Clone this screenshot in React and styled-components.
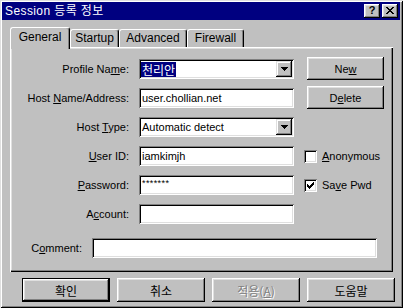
import React from 'react';
import styled, { createGlobalStyle } from 'styled-components';

const FONT = `"Liberation Sans", Arial, "Noto Sans CJK KR", sans-serif`;
const KFONT = `"Noto Sans CJK KR", "Liberation Sans", sans-serif`;

const Global = createGlobalStyle`
  html, body { margin: 0; padding: 0; background: #c0c0c0; }
  body { font-family: ${FONT}; }
  * { box-sizing: border-box; }
`;

const Window = styled.div`
  width: 403px;
  height: 308px;
  background: #c0c0c0;
  padding: 2px 3px 3px 2px;
  box-shadow: inset 1px 1px #dfdfdf, inset -1px -1px #000, inset 2px 2px #fff, inset -2px -2px #808080;
  display: flex;
  flex-direction: column;
  font-family: ${FONT};
  font-size: 11px;
  color: #000;
`;

const TitleBar = styled.div`
  height: 18px;
  background: #000080;
  display: flex;
  align-items: center;
  padding: 0 2px 0 3px;
`;

const TitleText = styled.div`
  color: #fff;
  font-family: ${FONT};
  font-size: 12px;
  letter-spacing: 0.4px;
  line-height: 18px;
`;

const TitleButtons = styled.div`
  margin-left: auto;
  display: flex;
  gap: 2px;
`;

const TitleButton = styled.div`
  width: 16px;
  height: 14px;
  background: #c0c0c0;
  box-shadow: inset -1px -1px #000, inset 1px 1px #fff, inset -2px -2px #808080, inset 2px 2px #dfdfdf;
  display: flex;
  align-items: center;
  justify-content: center;
  font-weight: bold;
  font-size: 11px;
  line-height: 1;
  color: #000;
  padding-bottom: 1px;
`;

const TabStrip = styled.div`
  margin: 7px 0 0 8px;
  height: 20px;
  display: flex;
  align-items: flex-end;
  position: relative;
  z-index: 2;
`;

const Tab = styled.div`
  width: ${p => p.$w}px;
  height: ${p => (p.$active ? 22 : 18)}px;
  margin-bottom: ${p => (p.$active ? -2 : 0)}px;
  background: #c0c0c0;
  border-top: 1px solid #fff;
  border-left: 1px solid #fff;
  border-right: 1px solid #000;
  border-radius: 3px 3px 0 0;
  box-shadow: inset -1px 0 #808080;
  display: flex;
  justify-content: center;
  padding-top: ${p => (p.$active ? 2 : 1)}px;
  font-size: 12px;
  line-height: 14px;
`;

const Panel = styled.div`
  margin-left: 8px;
  width: 383px;
  height: 225px;
  background: #c0c0c0;
  box-shadow: inset 1px 1px #fff, inset -1px -1px #000, inset -2px -2px #808080, inset 2px 2px #dfdfdf;
  padding: 12px 2px 0 2px;
  position: relative;
  z-index: 1;
`;

const FormGrid = styled.div`
  display: grid;
  grid-template-columns: 117px 155px auto;
  grid-template-rows: repeat(6, 20px);
  column-gap: 10px;
  row-gap: 9px;
  align-items: center;
`;

const Label = styled.div`
  text-align: right;
  white-space: nowrap;
  font-size: 11px;
`;

const Field = styled.div`
  height: 20px;
  width: ${p => p.$w || 155}px;
  background: #fff;
  box-shadow: inset 1px 1px #808080, inset -1px -1px #fff, inset 2px 2px #000, inset -2px -2px #dfdfdf;
  display: flex;
  align-items: center;
  padding: 0 2px 0 3px;
  font-size: 11px;
  white-space: nowrap;
  overflow: hidden;
`;

const PwdText = styled.span`
  font-size: 9px;
  line-height: 1;
  margin-top: -3px;
  letter-spacing: 0.4px;
`;

const ComboField = styled(Field)`
  padding: 2px 2px 2px 2px;
  align-items: stretch;
`;

const ComboValue = styled.div`
  flex: 1;
  display: flex;
  align-items: center;
  padding-left: ${p => (p.$selected ? 0 : 1)}px;
`;

const Selection = styled.span`
  background: #000080;
  color: #fff;
  font-family: ${KFONT};
  font-size: 12px;
  line-height: 15px;
  padding: 0 1px;
`;

const DropButton = styled.div`
  width: 16px;
  background: #c0c0c0;
  box-shadow: inset -1px -1px #000, inset 1px 1px #dfdfdf, inset -2px -2px #808080, inset 2px 2px #fff;
  display: flex;
  align-items: center;
  justify-content: center;
`;

const SideButton = styled.div`
  align-self: start;
  margin: -2px 0 0 3px;
  width: 77px;
  height: 23px;
  background: #c0c0c0;
  box-shadow: inset -1px -1px #000, inset 1px 1px #fff, inset -2px -2px #808080, inset 2px 2px #dfdfdf;
  display: flex;
  align-items: center;
  justify-content: center;
  font-size: 11px;
`;

const CheckRow = styled.div`
  display: flex;
  align-items: center;
  gap: 5px;
  font-size: 11px;
`;

const CheckBox = styled.div`
  width: 13px;
  height: 13px;
  background: #fff;
  box-shadow: inset 1px 1px #808080, inset -1px -1px #fff, inset 2px 2px #000, inset -2px -2px #dfdfdf;
  display: flex;
  align-items: center;
  justify-content: center;
`;

const CommentRow = styled.div`
  margin-top: 14px;
  display: flex;
  align-items: center;
  gap: 10px;
`;

const CommentLabel = styled(Label)`
  width: 70px;
`;

const ButtonRow = styled.div`
  margin: 6px 0 0 20px;
  display: flex;
  gap: 7px;
`;

const DialogButton = styled.div`
  width: 88px;
  height: 24px;
  background: #c0c0c0;
  box-shadow: ${p =>
    p.$default
      ? 'inset 0 0 0 1px #000, inset -2px -2px #000, inset 2px 2px #fff, inset -3px -3px #808080, inset 3px 3px #dfdfdf'
      : 'inset -1px -1px #000, inset 1px 1px #fff, inset -2px -2px #808080, inset 2px 2px #dfdfdf'};
  display: flex;
  align-items: center;
  justify-content: center;
  font-family: ${KFONT};
  font-size: 12px;
  color: ${p => (p.$disabled ? '#808080' : '#000')};
  text-shadow: ${p => (p.$disabled ? '1px 1px 0 #fff' : 'none')};
`;

const Arrow = () => (
  <svg width="7" height="4" viewBox="0 0 7 4" shapeRendering="crispEdges">
    <polygon points="0,0 7,0 3.5,4" fill="#000" />
  </svg>
);

const CheckMark = () => {
  const px = [
    [6, 0], [5, 1], [6, 1], [0, 2], [4, 2], [5, 2], [6, 2],
    [0, 3], [1, 3], [3, 3], [4, 3], [5, 3],
    [0, 4], [1, 4], [2, 4], [3, 4], [4, 4],
    [1, 5], [2, 5], [3, 5], [2, 6],
  ];
  return (
    <svg width="7" height="7" viewBox="0 0 7 7" shapeRendering="crispEdges">
      {px.map(([x, y]) => (
        <rect key={`${x}-${y}`} x={x} y={y} width="1" height="1" fill="#000" />
      ))}
    </svg>
  );
};

const CloseGlyph = () => (
  <svg width="8" height="7" viewBox="0 0 8 7" shapeRendering="crispEdges">
    <path d="M0 0h2v1h-2zM6 0h2v1h-2zM1 1h2v1h-2zM5 1h2v1h-2zM2 2h4v1h-4zM3 3h2v1h-2zM2 4h4v1h-4zM1 5h2v1h-2zM5 5h2v1h-2zM0 6h2v1h-2zM6 6h2v1h-2z" fill="#000" />
  </svg>
);

export default function App() {
  return (
    <>
      <Global />
      <Window>
        <TitleBar>
          <TitleText>Session 등록 정보</TitleText>
          <TitleButtons>
            <TitleButton>?</TitleButton>
            <TitleButton><CloseGlyph /></TitleButton>
          </TitleButtons>
        </TitleBar>

        <TabStrip>
          <Tab $w={60} $active>General</Tab>
          <Tab $w={49}>Startup</Tab>
          <Tab $w={68}>Advanced</Tab>
          <Tab $w={57}>Firewall</Tab>
        </TabStrip>

        <Panel>
          <FormGrid>
            <Label>Profile Na<u>m</u>e:</Label>
            <ComboField>
              <ComboValue $selected><Selection>천리안</Selection></ComboValue>
              <DropButton><Arrow /></DropButton>
            </ComboField>
            <SideButton>Ne<u>w</u></SideButton>

            <Label>Host <u>N</u>ame/Address:</Label>
            <Field>user.chollian.net</Field>
            <SideButton>D<u>e</u>lete</SideButton>

            <Label>Host <u>T</u>ype:</Label>
            <ComboField>
              <ComboValue>Automatic detect</ComboValue>
              <DropButton><Arrow /></DropButton>
            </ComboField>
            <div />

            <Label><u>U</u>ser ID:</Label>
            <Field>iamkimjh</Field>
            <CheckRow>
              <CheckBox />
              <span><u>A</u>nonymous</span>
            </CheckRow>

            <Label><u>P</u>assword:</Label>
            <Field><PwdText>*******</PwdText></Field>
            <CheckRow>
              <CheckBox><CheckMark /></CheckBox>
              <span>Sa<u>v</u>e Pwd</span>
            </CheckRow>

            <Label>A<u>c</u>count:</Label>
            <Field />
            <div />
          </FormGrid>

          <CommentRow>
            <CommentLabel>C<u>o</u>mment:</CommentLabel>
            <Field $w={285} />
          </CommentRow>
        </Panel>

        <ButtonRow>
          <DialogButton $default>확인</DialogButton>
          <DialogButton>취소</DialogButton>
          <DialogButton $disabled>적용(<u>A</u>)</DialogButton>
          <DialogButton>도움말</DialogButton>
        </ButtonRow>
      </Window>
    </>
  );
}
